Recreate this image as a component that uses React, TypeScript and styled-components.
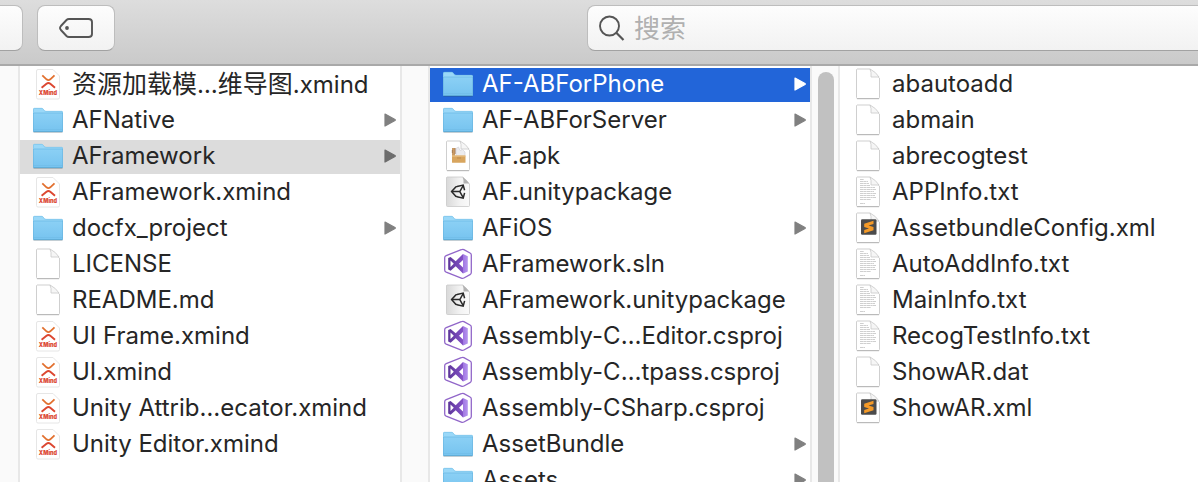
import React, { useState } from "react";
import styled, { createGlobalStyle, css } from "styled-components";

const GlobalStyle = createGlobalStyle`
  * { box-sizing: border-box; }
  html, body { margin: 0; height: 100%; overflow: hidden; background: #fff; }
  body, button, input {
    font-family: Inter, "Noto Sans CJK SC", sans-serif;
    font-size: 24px;
    color: #262626;
  }
`;

const Window = styled.div`
  display: flex;
  flex-direction: column;
  height: 100vh;
  overflow: hidden;
`;

const Toolbar = styled.header`
  display: flex;
  flex: none;
  align-items: flex-start;
  padding-top: 5px;
  height: 66px;
  background: linear-gradient(#dddddd, #cacaca);
  border-bottom: 2px solid #a9a9a9;
`;

const controlSurface = css`
  height: 46px;
  background: linear-gradient(#fdfdfd, #f2f2f2);
  border: 1px solid #bdbdbd;
  border-bottom-color: #a2a2a2;
  border-radius: 8px;
`;

const ToolButton = styled.button<{ $edge?: boolean }>`
  ${controlSurface}
  display: grid;
  place-items: center;
  width: ${(p) => (p.$edge ? 23 : 78)}px;
  margin-right: ${(p) => (p.$edge ? 14 : 0)}px;
  padding: 0;
  ${(p) => p.$edge && "border-left: 0; border-top-left-radius: 0; border-bottom-left-radius: 0;"}
`;

const SearchField = styled.label`
  ${controlSurface}
  display: flex;
  align-items: center;
  flex: 0 0 51%;
  gap: 8px;
  padding: 0 0 2px 10px;
  margin-left: auto;
  border-right: 0;
  border-top-right-radius: 0;
  border-bottom-right-radius: 0;
`;

const SearchInput = styled.input`
  flex: 1;
  min-width: 0;
  padding: 4px 0 0;
  border: 0;
  outline: 0;
  background: transparent;
  font-size: 26px;
  line-height: 38px;
  &::placeholder { color: #b0b0b0; opacity: 1; }
`;

const Browser = styled.main`
  display: flex;
  flex: 1;
  min-height: 0;
  overflow: hidden;
`;

const Gutter = styled.div<{ $first?: boolean }>`
  flex: none;
  width: ${(p) => (p.$first ? 20 : 30)}px;
  padding-top: 6px;
  background: #fafafa;
  border: solid #e8e8e8;
  border-width: ${(p) => (p.$first ? "0 2px 0 0" : "0 2px")};
`;

const Thumb = styled.div`
  width: 16px;
  height: 100%;
  margin: 0 auto 0 6px;
  background: #c1c1c1;
  border-radius: 8px 8px 0 0;
`;

const Column = styled.ul<{ $fill?: boolean }>`
  flex: ${(p) => (p.$fill ? "1 1 0" : "0 0 380px")};
  min-width: 0;
  margin: 0;
  padding: 2px 0 0;
  list-style: none;
`;

type Highlight = "none" | "path" | "active";
const backgrounds = { none: "transparent", path: "#dcdcdc", active: "#2265d9" };

const Row = styled.button<{ $highlight: Highlight }>`
  display: flex;
  align-items: center;
  gap: 9px;
  width: 100%;
  height: 34px;
  margin: 0 0 2px;
  padding: 0 4px 0 13px;
  border: 0;
  text-align: left;
  background: ${(p) => backgrounds[p.$highlight]};
  color: ${(p) => (p.$highlight === "active" ? "#fff" : "#262626")};
`;

const Name = styled.span`
  flex: 1;
  min-width: 0;
  height: 34px;
  line-height: 32px;
  white-space: nowrap;
`;

const Han = styled.span`
  font-size: 25px;
`;

const Art = styled.svg`
  display: block;
  flex: none;
`;

type Kind = "folder" | "xmind" | "file" | "text" | "sublime" | "apk" | "unity" | "vs";
type Entry = { name: string; kind: Kind };

function Sheet() {
  return (
    <>
      <path d="M4 1H17L26.500 10V29.500Q26.500 30.500 25.500 30.500H4.500Q3.500 30.500 3.500 29.500V1.500Z" fill="#fff" stroke="#cfcfcf" />
      <path d="M4 30.700H26" stroke="#b5b5b5" />
      <path d="M17 1Q18.500 4 18 9H26Q23 4 17 1Z" fill="#f6f6f6" stroke="#c9c9c9" strokeWidth=".8" />
    </>
  );
}

function FileIcon({ kind }: { kind: Kind }) {
  return (
    <Art width="30" height="34" viewBox="0 0 30 34" fill="none" aria-hidden="true">
      {kind === "folder" && (
        <>
          <path d="M.5 28.500H29.500" stroke="#000" strokeOpacity=".16" />
          <path d="M0 27V5.500Q0 4 1.500 4H8.500Q9.700 4 10.400 5L11.300 6.300Q11.800 7 13 7H28.500Q30 7 30 8.500V27Z" fill="#9ad8f8" />
          <path d="M.3 8V5.500Q.3 4.300 1.500 4.300H8.500Q9.600 4.300 10.200 5.200L11.100 6.500Q11.700 7.300 13 7.300H28.500Q29.700 7.300 29.700 8.500" stroke="#72bde6" strokeWidth=".6" />
          <path d="M0 9H30V27Q30 28 29 28H1Q0 28 0 27Z" fill="url(#folderFace)" />
          <path d="M0 9H30" stroke="#68b7e4" strokeWidth=".7" />
          <path d="M.5 25.500H29.500" stroke="#6fbbe6" strokeWidth=".6" />
          <path d="M.3 9V27.500M29.700 9V27.500" stroke="#62aeda" strokeWidth=".6" />
          <path d="M.5 27.700H29.500" stroke="#559fc9" strokeWidth=".8" />
        </>
      )}
      {kind === "xmind" && (
        <>
          <path d="M5 1.500H20L26.500 8V29.500Q26.500 31 25 31H5Q3.500 31 3.500 29.500V3Q3.500 1.500 5 1.500Z" fill="#fff" stroke="#e6e6e6" />
          <path d="M9.300 7.300L13.500 11.300Q15.400 12.900 17.300 11.300L21.500 7.300" stroke="#e2702f" strokeWidth="1.800" />
          <path d="M8.600 19.700L13.500 15.700Q15.400 14.200 17.300 15.700L22 19.700" stroke="#dc4630" strokeWidth="1.900" />
          <text x="15" y="27" textAnchor="middle" fontFamily="Inter, sans-serif" fontSize="5.500" fontWeight="900" fill="#dc4b36">XMind</text>
        </>
      )}
      {kind === "file" && <Sheet />}
      {kind === "text" && (
        <>
          <Sheet />
          <path d="M7 3.500H11M7 5.500H15M7 7.500H16M7 9.500H17M7 11.500H22M7 13.500H23M7 15.500H21M7 17.500H23M7 19.500H22M7 21.500H23M7 23.500H18M7 27.500H12" stroke="#cacaca" strokeWidth=".9" strokeDasharray="3.600 .3 2.300 .3" />
        </>
      )}
      {kind === "sublime" && (
        <>
          <Sheet />
          <rect x="8" y="7.300" width="15.500" height="15.500" rx="1.200" fill="#4b4b4b" />
          <path d="M20.500 8.800V11.900L15.500 13.500L20.500 15V18.200L11.200 21.200V18.100L16 16.500L11.200 15V11.800Z" fill="#f59a27" />
        </>
      )}
      {kind === "apk" && (
        <>
          <Sheet />
          <path d="M9 8H12V16H9Z" fill="#c99a65" />
          <path d="M13 15V8.500L15.500 7L17 10.500L19.500 9.500L22 12V16H13Z" fill="#ececef" stroke="#cfcfd5" strokeWidth=".6" />
          <path d="M9.300 10V13M12.200 8V14" stroke="#946b49" strokeWidth=".7" />
          <rect x="9" y="15.500" width="13.500" height="7.300" rx=".5" fill="#d8a55e" />
          <path d="M9 16H22.500" stroke="#edc78e" />
          <path d="M14 18H18" stroke="#b98749" strokeWidth=".8" />
        </>
      )}
      {kind === "unity" && (
        <>
          <path d="M4 1H20L26.500 8V29.500Q26.500 30.500 25.500 30.500H4.500Q3.500 30.500 3.500 29.500V1.500Z" fill="url(#unityFace)" stroke="#c9c9c9" strokeWidth=".8" />
          <path d="M19.500 1Q21 4 20.500 7.500H26.300Q24 4 19.500 1Z" fill="#b2b2b2" />
          <path d="M14.500 10.400L12.800 10.900L8.600 15.600L12.800 20.300L14.500 20.800M14 10.500L20.200 9.100L21.600 14.300M21.600 16.900L20.200 22.200L14 20.700" stroke="#2a2a2a" strokeWidth="1.500" />
          <path d="M8.600 15.600H16.800M16.800 15.600L20.200 9.500M16.800 15.600L20.200 21.700" stroke="#2a2a2a" strokeWidth="1.500" />
        </>
      )}
      {kind === "vs" && (
        <>
          <path d="M18.300 1.700Q19.600 1 20.900 1.600L27 5Q28.300 5.700 28.300 7V24.500Q28.300 25.900 27 26.600L20.900 30Q19.600 30.700 18.300 30.100L3.200 24.200Q1.700 23.500 1.700 22V9.700Q1.700 8.200 3.200 7.600Z" fill="#fff" stroke="#9166c9" strokeWidth="1.300" />
          <path fillRule="evenodd" d="M5.200 10L7.600 8.900L12.700 13.200L20 6V12L16 15.800L20 19.500V25.500L12.700 18.300L7.600 22.700L5.200 21.600ZM7.500 12.600V19L10.800 15.800Z" fill="url(#vsRibbon)" />
          <path d="M20 6L24.800 8.200V23.400L20 25.600Z" fill="url(#vsPanel)" />
        </>
      )}
    </Art>
  );
}

function Disclosure({ highlight }: { highlight: Highlight }) {
  const color = highlight === "active" ? "#fff" : highlight === "path" ? "#6c6c6c" : "#808080";
  return (
    <Art width="12" height="16" viewBox="0 0 12 16" aria-hidden="true">
      <path d="M1 1L11 6.500Q11.600 7 11 7.500L1 13Z" fill={color} stroke={color} strokeWidth="1.200" strokeLinejoin="round" />
    </Art>
  );
}

const projects: Entry[] = [
  { name: "资源加载模…维导图.xmind", kind: "xmind" },
  { name: "AFNative", kind: "folder" },
  { name: "AFramework", kind: "folder" },
  { name: "AFramework.xmind", kind: "xmind" },
  { name: "docfx_project", kind: "folder" },
  { name: "LICENSE", kind: "file" },
  { name: "README.md", kind: "file" },
  { name: "UI Frame.xmind", kind: "xmind" },
  { name: "UI.xmind", kind: "xmind" },
  { name: "Unity Attrib…ecator.xmind", kind: "xmind" },
  { name: "Unity Editor.xmind", kind: "xmind" },
];

const framework: Entry[] = [
  { name: "AF-ABForPhone", kind: "folder" },
  { name: "AF-ABForServer", kind: "folder" },
  { name: "AF.apk", kind: "apk" },
  { name: "AF.unitypackage", kind: "unity" },
  { name: "AFiOS", kind: "folder" },
  { name: "AFramework.sln", kind: "vs" },
  { name: "AFramework.unitypackage", kind: "unity" },
  { name: "Assembly-C…Editor.csproj", kind: "vs" },
  { name: "Assembly-C…tpass.csproj", kind: "vs" },
  { name: "Assembly-CSharp.csproj", kind: "vs" },
  { name: "AssetBundle", kind: "folder" },
  { name: "Assets", kind: "folder" },
];

const phone: Entry[] = [
  { name: "abautoadd", kind: "file" },
  { name: "abmain", kind: "file" },
  { name: "abrecogtest", kind: "file" },
  { name: "APPInfo.txt", kind: "text" },
  { name: "AssetbundleConfig.xml", kind: "sublime" },
  { name: "AutoAddInfo.txt", kind: "text" },
  { name: "MainInfo.txt", kind: "text" },
  { name: "RecogTestInfo.txt", kind: "text" },
  { name: "ShowAR.dat", kind: "file" },
  { name: "ShowAR.xml", kind: "sublime" },
];

// Han characters are set one pixel larger than the Latin text beside them.
function FileName({ name }: { name: string }) {
  const runs = name.split(/([\u4e00-\u9fff]+)/);
  return <Name>{runs.map((run, i) => (i % 2 ? <Han key={i}>{run}</Han> : run))}</Name>;
}

type ListProps = { entries: Entry[]; selected?: string; mark?: Highlight; fill?: boolean };

function FileList({ entries, selected, mark = "none", fill }: ListProps) {
  return (
    <Column $fill={fill}>
      {entries.map(({ name, kind }) => {
        const highlight = name === selected ? mark : "none";
        return (
          <li key={name}>
            <Row type="button" $highlight={highlight}>
              <FileIcon kind={kind} />
              <FileName name={name} />
              {kind === "folder" && <Disclosure highlight={highlight} />}
            </Row>
          </li>
        );
      })}
    </Column>
  );
}

const Definitions = styled.svg`
  display: block;
`;

function Gradients() {
  return (
    <Definitions width="0" height="0" aria-hidden="true">
      <defs>
        <linearGradient id="folderFace" x1="0" y1="0" x2="0" y2="1">
          <stop stopColor="#8bd0f5" />
          <stop offset="1" stopColor="#76c3ef" />
        </linearGradient>
        <linearGradient id="unityFace" x1="0" y1="0" x2="1" y2="0">
          <stop stopColor="#d9d9d9" />
          <stop offset=".6" stopColor="#f3f3f3" />
          <stop offset="1" stopColor="#fafafa" />
        </linearGradient>
        <linearGradient id="vsRibbon" x1="0" y1="0" x2="1" y2="0">
          <stop stopColor="#5c3599" />
          <stop offset="1" stopColor="#8452c8" />
        </linearGradient>
        <linearGradient id="vsPanel" x1="0" y1="0" x2="1" y2="0">
          <stop stopColor="#a076e2" />
          <stop offset="1" stopColor="#b594ee" />
        </linearGradient>
      </defs>
    </Definitions>
  );
}

export default function App() {
  const [query, setQuery] = useState("");
  return (
    <Window>
      <GlobalStyle />
      <Gradients />
      <Toolbar>
        <ToolButton type="button" $edge aria-label="Share" />
        <ToolButton type="button" aria-label="Edit tags">
          <Art width="34" height="22" viewBox="0 0 34 22" fill="none" aria-hidden="true">
            <path d="M10 2H29.500Q33 2 33 5V17Q33 20 29.500 20H10Q8.500 20 7.500 19L1.900 13Q.2 11 1.900 9L7.500 3Q8.500 2 10 2Z" stroke="#555" strokeWidth="1.900" />
            <circle cx="8" cy="11" r="1.900" fill="#555" />
          </Art>
        </ToolButton>
        <SearchField>
          <Art width="28" height="28" viewBox="0 0 28 28" fill="none" aria-hidden="true">
            <circle cx="11.500" cy="13" r="9.500" stroke="#555" strokeWidth="1.900" />
            <path d="M18.300 19.800L25.500 27" stroke="#555" strokeWidth="2.200" />
          </Art>
          <SearchInput aria-label="搜索" placeholder="搜索" value={query} onChange={(e) => setQuery(e.target.value)} />
        </SearchField>
      </Toolbar>
      <Browser>
        <Gutter $first />
        <FileList entries={projects} selected="AFramework" mark="path" />
        <Gutter />
        <FileList entries={framework} selected="AF-ABForPhone" mark="active" />
        <Gutter>
          <Thumb />
        </Gutter>
        <FileList entries={phone} fill />
      </Browser>
    </Window>
  );
}
